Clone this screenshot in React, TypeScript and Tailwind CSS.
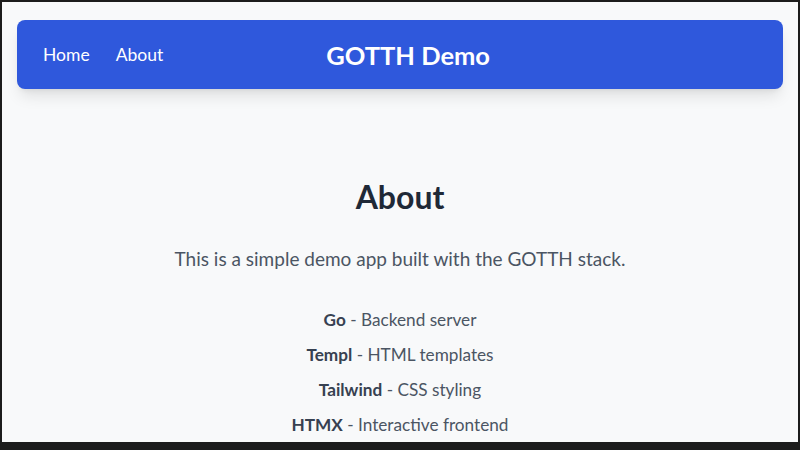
export default function App() {
  const stack = [
    { name: "Go", desc: "Backend server" },
    { name: "Templ", desc: "HTML templates" },
    { name: "Tailwind", desc: "CSS styling" },
    { name: "HTMX", desc: "Interactive frontend" },
  ];

  return (
    <div className="h-[450px] w-[800px] overflow-hidden bg-[#1c1c1c] pt-[2px] pl-[2px] pr-[2px] pb-[8px]">
      <div
        className="flex h-full flex-col overflow-hidden bg-[#f8f9fa]"
        style={{ fontFamily: "Lato, 'Noto Sans', sans-serif" }}
      >
        <header className="mx-[15px] mt-[18px] flex h-[69px] items-center rounded-lg bg-[#2f58dc] pt-[2px] pl-[26px] pr-6 shadow-lg">
          <nav className="flex items-center gap-[26px] text-[17.5px] text-white">
            <a href="#">Home</a>
            <a href="#">About</a>
          </nav>
          <h1 className="ml-[163px] text-[25.5px] font-bold text-white">GOTTH Demo</h1>
        </header>

        <main className="flex flex-col items-center pt-[89px] text-center">
          <h2 className="text-[32px] leading-[38px] font-bold text-[#1f2937]">About</h2>
          <p className="mt-[29px] text-[19px] text-[#4b5563]">
            This is a simple demo app built with the GOTTH stack.
          </p>
          <ul className="mt-[33px] flex flex-col gap-[9.5px] text-[17.2px] text-[#4b5563]">
            {stack.map((item) => (
              <li key={item.name}>
                <span className="font-bold text-[#374151]">{item.name}</span> - {item.desc}
              </li>
            ))}
          </ul>
        </main>
      </div>
    </div>
  );
}
